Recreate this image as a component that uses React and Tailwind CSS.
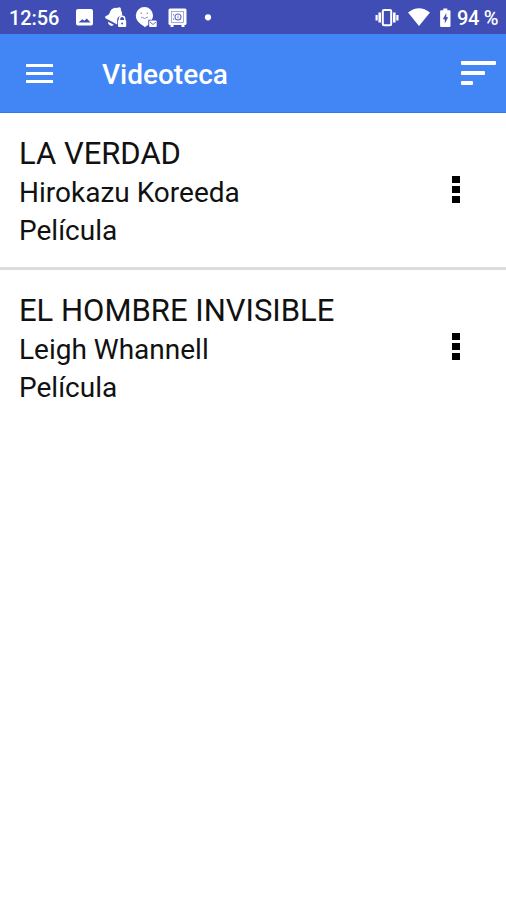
const peliculas = [
  { titulo: 'LA VERDAD', director: 'Hirokazu Koreeda', tipo: 'Película' },
  { titulo: 'EL HOMBRE INVISIBLE', director: 'Leigh Whannell', tipo: 'Película' },
];

// Iconos de notificaciones (lado izquierdo de la barra de estado)
const NotificationIcons = () => (
  <svg className="ml-[16px] h-[34px] w-[140px] shrink-0" viewBox="75 0 140 34" fill="#fff">
    {/* Imagen */}
    <path fillRule="evenodd" d="M78 9h13q2 0 2 2v12.500q0 2-2 2H78q-2 0-2-2V11q0-2 2-2ZM78.500 22.500h12l-3.700-4-2.500 2.300-2-1.500Z" />

    {/* Campana con candado */}
    <path d="M111.500 9.500q2.500-2.300 5-1.500l3-.8q2 .3 1.300 2.300 1.500 3 1.400 6.300c-3-.3-5 1.400-5 4.200v4.500l-11.700-6.200c-1-1.500 0-2.300 1.500-2.800 3-1 2.500-4 4.500-6Z" />
    <path d="M108 21.800l5.800 3c-1.800 2.300-5.600 1-5.800-3Z" />
    <path d="M119.500 20.500v-1.700a2.600 2.600 0 0 1 5.200 0v1.700" fill="none" stroke="#fff" strokeWidth="1.500" />
    <rect x="118" y="20" width="8.200" height="7" rx="1" />
    <circle cx="122.100" cy="23.500" r=".9" fill="#3f4db5" />

    {/* Carita con sobre */}
    <path d="M144.500 7a8.500 8.500 0 0 1 8.500 8.500c0 1.700-.4 3-1.200 4.200H148.300v5l-3.500 2.600c-1.500-2.500-9-4.500-9-11.800A8.600 8.600 0 0 1 144.500 7Z" />
    <circle cx="141.300" cy="13.300" r=".8" fill="#7f89cf" />
    <circle cx="147.300" cy="13.300" r=".8" fill="#7f89cf" />
    <path d="M141 17q3.500 3 7 0" fill="none" stroke="#7f89cf" strokeWidth=".9" />
    <rect x="149.200" y="20.500" width="7.500" height="6.500" rx=".8" />
    <path d="M149.700 21.800l3.300 2.700 3.300-2.700" fill="none" stroke="#3f4db5" strokeWidth=".8" />

    {/* Caja fuerte */}
    <rect x="168.500" y="8.500" width="18" height="16.500" rx="1.500" />
    <path d="M170.500 25h3v2h-3zM181.500 25h3v2h-3z" />
    <rect x="171.500" y="11.500" width="12" height="11" fill="none" stroke="#8c95d4" strokeWidth=".8" />
    <circle cx="178" cy="17" r="3" fill="none" stroke="#6570c4" strokeWidth="1.100" />
    <path d="M178 15.500v3M173.500 14v1.500M173.500 18.500v1.500" stroke="#6570c4" strokeWidth=".8" />

    <circle cx="208" cy="17.300" r="3.100" />
  </svg>
);

// Vibración, wifi y batería
const SystemIcons = () => (
  <svg className="ml-auto h-[34px] w-[78px] shrink-0" viewBox="374 0 78 34" fill="#fff">
    <rect x="382.800" y="10" width="8.400" height="15.200" rx="1.200" fill="none" stroke="#fff" strokeWidth="2" />
    <path d="M378.400 12.500h2.600v10h-2.600zM393 12.500h2.600v10H393zM375.500 15h2.200v5.500h-2.200zM396.300 15h2.200v5.500h-2.200z" />
    <path d="M408 12.500q11-8.500 22 0L419 26Z" />
    <path d="M443.300 8.500h4v1.800h2.200q1 0 1 1v14.700q0 1-1 1h-8.400q-1 0-1-1v-14.700q0-1 1-1h2.200Z" />
    <path d="M446.300 13l-3.500 6.300h2v4.200l3.400-6.300h-1.900Z" fill="#3f4db5" />
  </svg>
);

const StatusBar = () => (
  <div className="flex h-[34px] items-center bg-[#3f4db5] pl-[9px] pr-[8px] text-[20px] font-medium text-white">
    <span className="w-[50px] whitespace-nowrap pt-[2px] leading-[34px] tracking-[-0.1px]">12:56</span>
    <NotificationIcons />
    <SystemIcons />
    <span className="ml-[5px] w-[41px] whitespace-nowrap pt-[2px] leading-[34px] tracking-[-0.3px]">94 %</span>
  </div>
);

const Header = () => (
  <header className="flex h-[79px] items-center border-b border-[#2f78e8] bg-[#4285f4] pl-[26px] pr-[10px] text-white">
    <button aria-label="Menú" className="flex w-[27px] flex-col gap-[5px]">
      <span className="h-[3px] w-full bg-white" />
      <span className="h-[3px] w-full bg-white" />
      <span className="h-[3px] w-full bg-white" />
    </button>
    <h1 className="ml-[49px] pt-[3px] text-[28px] font-medium leading-[38px]">Videoteca</h1>
    <button aria-label="Ordenar" className="ml-auto flex w-[35px] flex-col gap-[6px]">
      <span className="h-[4px] w-full rounded-[1px] bg-white" />
      <span className="h-[4px] w-[24px] rounded-[1px] bg-white" />
      <span className="h-[4px] w-[12px] rounded-[1px] bg-white" />
    </button>
  </header>
);

const MovieItem = ({ pelicula }) => (
  <li className="flex h-[157px] items-start justify-between border-b-[3px] border-[#dcdcdc] pl-[19px] pr-[46px] pt-[21px] last:border-b-0">
    <div className="whitespace-nowrap text-[28px] leading-[38px] text-[#111]">
      <h2 className="text-[31px] leading-[40px]">{pelicula.titulo}</h2>
      <p>{pelicula.director}</p>
      <p>{pelicula.tipo}</p>
    </div>
    <button aria-label="Opciones" className="mt-[42px] flex flex-col gap-[3px]">
      <span className="h-[7px] w-[8px] bg-black" />
      <span className="h-[7px] w-[8px] bg-black" />
      <span className="h-[7px] w-[8px] bg-black" />
    </button>
  </li>
);

export default function App() {
  return (
    <div className="h-[900px] w-[506px] overflow-hidden bg-white font-['Roboto',sans-serif]">
      <StatusBar />
      <Header />
      <ul>
        {peliculas.map((pelicula) => (
          <MovieItem key={pelicula.titulo} pelicula={pelicula} />
        ))}
      </ul>
    </div>
  );
}
